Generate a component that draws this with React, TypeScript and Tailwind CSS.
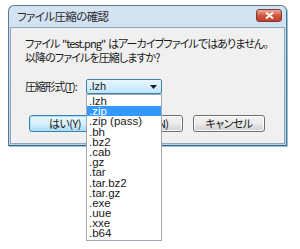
import React from 'react';

const formats = ['.lzh', '.zip', '.zip (pass)', '.bh', '.bz2', '.cab', '.gz', '.tar', '.tar.bz2', '.tar.gz', '.exe', '.uue', '.xxe', '.b64'];

const jp = "font-['Noto_Sans_CJK_JP','Noto_Sans',sans-serif] [font-feature-settings:'palt']";
const latin = "font-['Liberation_Sans','DejaVu_Sans',sans-serif]";

function Button({ label, primary }: { label: string; primary?: boolean }) {
  return (
    <button
      className={`w-[72px] h-[17px] rounded-[3px] border text-[11px] tracking-[-0.5px] leading-none text-[#1a1a1a] whitespace-nowrap ${jp} ${
        primary
          ? 'border-[#3c7fb1] bg-gradient-to-b from-[#eaf6fd] via-[#d9f0fc] to-[#a7d9f5] shadow-[inset_0_0_0_1px_#a9e2fb]'
          : 'border-[#707070] bg-gradient-to-b from-[#f2f2f2] via-[#ebebeb] to-[#cfcfcf] shadow-[inset_0_0_0_1px_#fcfcfc]'
      }`}
    >
      {label}
    </button>
  );
}

export default function App() {
  return (
    <div className="w-[300px] h-[249px] bg-white pt-[5px] pl-[8px]">
      {/* Window */}
      <div className="w-[279px] h-[141px] rounded-t-[6px] border border-[#5d7992] border-b-[#2f6c83] border-r-[#3f7890] bg-gradient-to-b from-[#d5e4f3] to-[#bcd2ea] flex flex-col px-[1px] pb-[1px] shadow-[1px_1px_0_#9cc4d6]">
        {/* Title bar */}
        <div className="h-[21px] flex items-center justify-between pl-[7px] pr-[3px]">
          <span className={`text-[11.5px] tracking-[-0.6px] text-[#2b2b2b] ${jp}`}>ファイル圧縮の確認</span>
          <div className="w-[26px] h-[13px] mt-[-2px] rounded-[3px] border border-[#7a3b35] bg-gradient-to-b from-[#e9a99a] via-[#d1563f] to-[#c0402a] flex items-center justify-center">
            <svg width="9" height="7" viewBox="0 0 9 7">
              <path d="M1 0.5 L8 6.5 M8 0.5 L1 6.5" stroke="white" strokeWidth="2" />
            </svg>
          </div>
        </div>

        {/* Client area */}
        <div className={`flex-1 bg-[#f0f0f0] border border-[#8ea5bd] pt-[8px] pl-[14px] text-[11px] tracking-[-0.9px] text-[#1a1a1a] whitespace-nowrap ${jp}`}>
          <p className="leading-[14px]">
            ファイル<span className="tracking-normal"> </span>"test.png"<span className="tracking-normal"> </span>はアーカイブファイルではありません。
          </p>
          <p className="leading-[14px]">以降のファイルを圧縮しますか?</p>

          <div className="flex items-center mt-[15px] h-[15px]">
            <span className="w-[61px] tracking-[-1.2px]">
              圧縮形式(<span className="underline">T</span>):
            </span>
            <div className="relative w-[76px] tracking-normal">
              <div className="h-[15px] rounded-[2px] border border-[#3c7fb1] bg-gradient-to-b from-[#eaf6fd] to-[#bee6fd] flex items-center justify-between pl-[2px] pr-[4px]">
                <span className={`text-[11px] leading-none ${latin}`}>.lzh</span>
                <svg width="7" height="4" viewBox="0 0 7 4">
                  <path d="M0 0 H7 L3.5 4 Z" fill="#1a1a1a" />
                </svg>
              </div>
              {/* Dropdown list */}
              <ul className={`absolute left-0 top-full w-full z-10 bg-white border border-[#a0aab4] py-[1px] text-[11.5px] ${latin}`}>
                {formats.map((f, i) => (
                  <li
                    key={f}
                    className={`h-[10.2px] leading-[10.2px] pl-[2px] ${i === 1 ? 'bg-[#3399ff] text-white' : 'text-[#1a1a1a]'}`}
                  >
                    {f}
                  </li>
                ))}
              </ul>
            </div>
          </div>

          <div className="flex gap-[10px] mt-[21px] pl-[4px]">
            <Button label="はい(Y)" primary />
            <Button label="いいえ(N)" />
            <Button label="キャンセル" />
          </div>
        </div>
      </div>
    </div>
  );
}
